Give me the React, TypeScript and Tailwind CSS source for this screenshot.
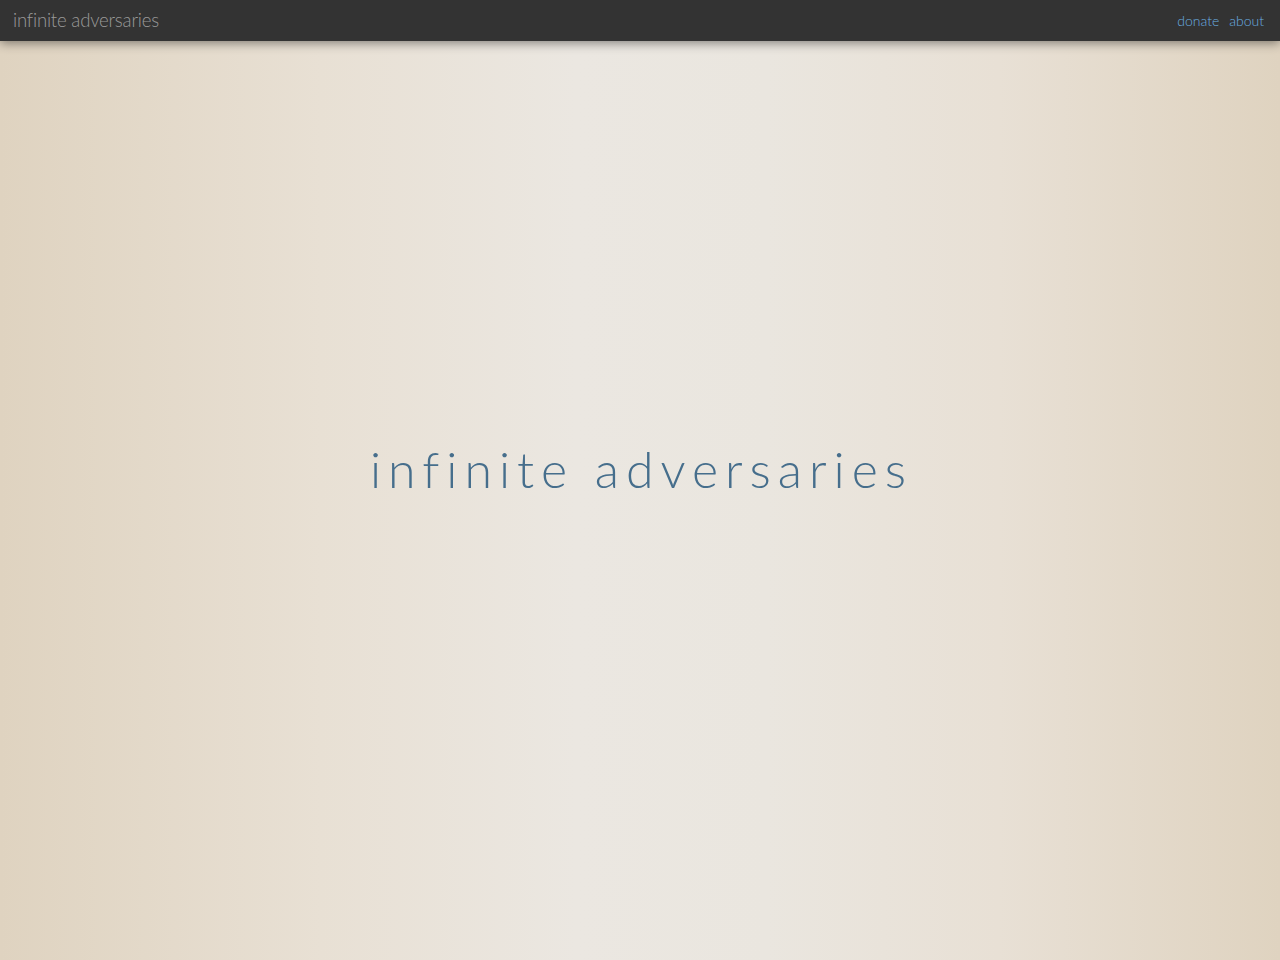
export default function App() {
  return (
    <div
      className="min-h-screen w-full flex flex-col bg-[linear-gradient(to_right,#dfd3c0_0%,#e8e0d4_25%,#ebe7e1_45%,#eae6df_60%,#e8e0d5_78%,#dfd3c0_100%)]"
      style={{ fontFamily: 'Lato, "Open Sans", sans-serif' }}
    >
      {/* Top bar */}
      <header className="relative z-10 h-[41px] bg-[#333333] flex items-center justify-between px-[13px] shadow-[0_2px_10px_rgba(0,0,0,0.45)]">
        <span className="text-[18.6px] font-light text-[#9a9a9a] tracking-[-0.2px]">infinite adversaries</span>
        <nav className="flex items-center gap-[10px] pr-[3px] text-[14px] font-light text-[#6aaee0]">
          <a href="#">donate</a>
          <a href="#">about</a>
        </nav>
      </header>

      {/* Main */}
      <main className="flex-1 h-[919px] flex items-center justify-center pb-[62px]">
        <h1 className="text-[50px] font-light text-[#466e8c] tracking-[7px] pl-[3px]">
          infinite adversaries
        </h1>
      </main>
    </div>
  );
}
